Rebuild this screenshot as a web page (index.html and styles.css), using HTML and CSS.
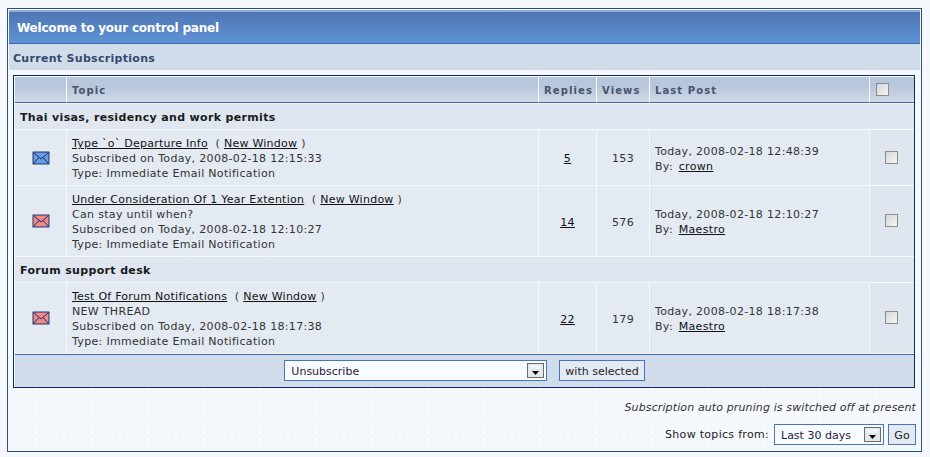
FILE: index.html
```html
<!DOCTYPE html>
<html lang="en">
<head>
    <meta charset="UTF-8">
    <title>Control Panel</title>
    <link rel="stylesheet" href="styles.css">
</head>
<body>
    <svg class="sprites" width="0" height="0">
        <defs>
            <symbol id="mail" viewBox="0 0 18 14">
                <rect x="0" y="0" width="18" height="14" fill="#f4f7fb"/>
                <rect x="1" y="1" width="16" height="12" fill="currentColor" stroke="#14306a" stroke-width="1"/>
                <path d="M1.5 1.5L9 8l7.5-6.5M1.5 12.5L7 6.5M16.5 12.5L11 6.5" fill="none" stroke="#14306a" stroke-width="1"/>
            </symbol>
            <symbol id="arrow" viewBox="0 0 17 15">
                <rect x="0.5" y="0.5" width="16" height="14" fill="#e3e6ea" stroke="#6b6b6b"/>
                <path d="M3 2v4M5 2v4M7 2v4M9 2v4M11 2v4M13 2v4" stroke="#fff" stroke-width="1"/>
                <path d="M5 8h7l-3.500 4z" fill="#000"/>
            </symbol>
        </defs>
    </svg>

    <div class="panel">
        <div class="panel-title">Welcome to your control panel</div>
        <div class="panel-sub">Current Subscriptions</div>

        <table class="subs">
            <thead>
                <tr>
                    <th class="col-icon"></th>
                    <th class="col-topic">Topic</th>
                    <th class="col-replies">Replies</th>
                    <th class="col-views">Views</th>
                    <th class="col-last">Last Post</th>
                    <th class="col-check"><input type="checkbox" class="check"></th>
                </tr>
            </thead>
            <tbody>
                <tr class="forum"><td colspan="6">Thai visas, residency and work permits</td></tr>
                <tr class="row-a">
                    <td class="icon"><svg class="mail blue" width="18" height="14"><use href="#mail"/></svg></td>
                    <td class="topic">
                        <a href="#">Type `o` Departure Info</a> &nbsp;( <a href="#">New Window</a> )<br>
                        Subscribed on Today, 2008-02-18 12:15:33<br>
                        Type: Immediate Email Notification
                    </td>
                    <td class="num"><a href="#">5</a></td>
                    <td class="num">153</td>
                    <td class="last">Today, 2008-02-18 12:48:39<br>By: <a href="#">crown</a></td>
                    <td class="pick"><input type="checkbox" class="check"></td>
                </tr>
                <tr class="row-b">
                    <td class="icon"><svg class="mail red" width="18" height="14"><use href="#mail"/></svg></td>
                    <td class="topic">
                        <a href="#">Under Consideration Of 1 Year Extention</a> &nbsp;( <a href="#">New Window</a> )<br>
                        Can stay until when?<br>
                        Subscribed on Today, 2008-02-18 12:10:27<br>
                        Type: Immediate Email Notification
                    </td>
                    <td class="num"><a href="#">14</a></td>
                    <td class="num">576</td>
                    <td class="last">Today, 2008-02-18 12:10:27<br>By: <a href="#">Maestro</a></td>
                    <td class="pick"><input type="checkbox" class="check"></td>
                </tr>
                <tr class="forum"><td colspan="6">Forum support desk</td></tr>
                <tr class="row-b">
                    <td class="icon"><svg class="mail red" width="18" height="14"><use href="#mail"/></svg></td>
                    <td class="topic">
                        <a href="#">Test Of Forum Notifications</a> &nbsp;( <a href="#">New Window</a> )<br>
                        NEW THREAD<br>
                        Subscribed on Today, 2008-02-18 18:17:38<br>
                        Type: Immediate Email Notification
                    </td>
                    <td class="num"><a href="#">22</a></td>
                    <td class="num">179</td>
                    <td class="last">Today, 2008-02-18 18:17:38<br>By: <a href="#">Maestro</a></td>
                    <td class="pick"><input type="checkbox" class="check"></td>
                </tr>
            </tbody>
            <tfoot>
                <tr>
                    <td colspan="6">
                        <div class="actions">
                            <span class="select select-wide">Unsubscribe<svg class="arrow" width="17" height="15"><use href="#arrow"/></svg></span>
                            <button class="btn">with selected</button>
                        </div>
                    </td>
                </tr>
            </tfoot>
        </table>

        <div class="pruning">Subscription auto pruning is switched off at present</div>
        <div class="show-from">
            <span class="show-label">Show topics from:</span>
            <span class="select select-small">Last 30 days<svg class="arrow" width="17" height="15"><use href="#arrow"/></svg></span>
            <button class="btn btn-go">Go</button>
        </div>
    </div>
</body>
</html>
```

FILE: styles.css
```css
/* General Styles */
html, body {
    height: 100%;
}

body {
    margin: 0;
    padding: 8px 8px 0 7px;
    box-sizing: border-box;
    overflow: hidden;
    background-color: #f5f9fe;
    color: #222;
    font-family: "DejaVu Sans", Verdana, sans-serif;
    font-size: 11px;
}

a {
    color: #111;
    text-decoration: underline;
}

.sprites {
    position: absolute;
}

/* Outer panel */
.panel {
    height: 444px;
    box-sizing: border-box;
    border: 1px solid #2c4d85;
    padding: 1px;
    background-color: #f5f9fe;
    background-image: radial-gradient(#e6eaf0 0.6px, transparent 0.8px);
    background-size: 7px 7px;
}

.panel-title {
    height: 31px;
    line-height: 32px;
    padding-left: 8px;
    border-top: 2px solid #8fb0dc;
    border-bottom: 1px solid #3f69a8;
    background: linear-gradient(#4f76b3, #5f93d6);
    color: #fff;
    font-size: 12px;
    font-weight: bold;
    letter-spacing: -0.2px;
}

.panel-sub {
    height: 26px;
    line-height: 29px;
    padding-left: 4px;
    background-color: #d1dceb;
    color: #33496e;
    font-weight: bold;
    letter-spacing: 0.3px;
}

/* Subscriptions table */
.subs {
    width: 902px;
    margin: 5px 0 0 4px;
    border: 1px solid #0f2a5c;
    border-spacing: 0;
    border-collapse: separate;
    padding: 1px 0 0 1px;
    table-layout: fixed;
    background-color: #f5f9fe;
}

.subs th {
    height: 23px;
    padding: 2px 5px 0;
    border-right: 1px solid #f5f9fe;
    border-bottom: 1px solid #3f69a8;
    background: linear-gradient(#b7c6dc, #b9c7dc 40%, #d0dae8);
    color: #46546e;
    font-size: 10px;
    font-weight: bold;
    letter-spacing: 1.1px;
    text-align: left;
}

.subs .col-icon { width: 41px; }
.subs .col-topic { width: 461px; }
.subs .col-replies { width: 47px; }
.subs .col-views { width: 42px; }
.subs .col-last { width: 209px; }
.subs .col-check { border-right: 0; }

.subs td {
    padding: 2px 5px 0;
    border-right: 1px solid #f5f9fe;
    border-bottom: 1px solid #f5f9fe;
    background-color: #e4eaf2;
    color: #333;
    line-height: 15px;
    letter-spacing: 0.32px;
}

.subs .forum td {
    height: 23px;
    border-right: 0;
    background-color: #dfe6f0;
    color: #1a1a1a;
    font-size: 11px;
    font-weight: bold;
    letter-spacing: 0.34px;
}

.subs tbody tr:first-child td {
    border-top: 1px solid #f5f9fe;
}

.subs .row-a td {
    height: 53px;
}

.subs .row-b td {
    height: 68px;
}

.subs td.icon,
.subs td.num,
.subs td.pick {
    text-align: center;
}

.subs td.icon {
    padding-top: 0;
}

.subs td.pick {
    padding: 0 7px 0 5px;
    border-right: 0;
    background-color: #dfe6f0;
}

.subs .row-b td.pick {
    padding-bottom: 1px;
}

.topic a {
    letter-spacing: 0.25px;
}

.last a {
    margin-left: 2px;
}

.mail {
    display: block;
    margin: 0 auto;
}

.mail.blue { color: #6d9be0; }
.mail.red { color: #ee8a8a; }

.check {
    appearance: none;
    display: block;
    width: 13px;
    height: 13px;
    margin: 0 auto;
    border: 1px solid #8c8c8c;
    background: linear-gradient(135deg, #d4d6da, #f6f6f6);
}

.col-check .check {
    margin: -2px 0 0 1px;
}

.subs tfoot td {
    height: 32px;
    padding: 0;
    border-top: 1px solid #3f69a8;
    border-right: 0;
    border-bottom: 0;
    background-color: #d1dceb;
}

.actions {
    display: flex;
    justify-content: center;
    align-items: center;
    gap: 12px;
    margin-top: -1px;
}

/* Form controls */
.select {
    position: relative;
    display: block;
    box-sizing: border-box;
    height: 21px;
    line-height: 21px;
    padding-left: 6px;
    border: 1px solid #4a74b8;
    background-color: #f8fbff;
    color: #2a1a3a;
    letter-spacing: 0;
}

.select-wide {
    width: 263px;
}

.select-small {
    width: 110px;
    line-height: 22px;
}

.arrow {
    position: absolute;
    top: 2px;
    right: 2px;
}

.btn {
    height: 21px;
    padding: 1px 5px 0;
    border: 1px solid #4a74b8;
    background-color: #e4eaf4;
    color: #222;
    font-family: inherit;
    font-size: 11px;
    letter-spacing: 0;
}

.pruning {
    margin: 13px 4px 0 0;
    color: #333;
    font-style: italic;
    letter-spacing: 0.12px;
    text-align: right;
}

.show-from {
    display: flex;
    justify-content: flex-end;
    align-items: center;
    gap: 4px;
    margin: 10px 4px 0 0;
}

.show-label {
    margin: -1px 1px 0 0;
    letter-spacing: 0.3px;
}

.btn-go {
    width: 28px;
    padding: 2px 0 0;
}
```
